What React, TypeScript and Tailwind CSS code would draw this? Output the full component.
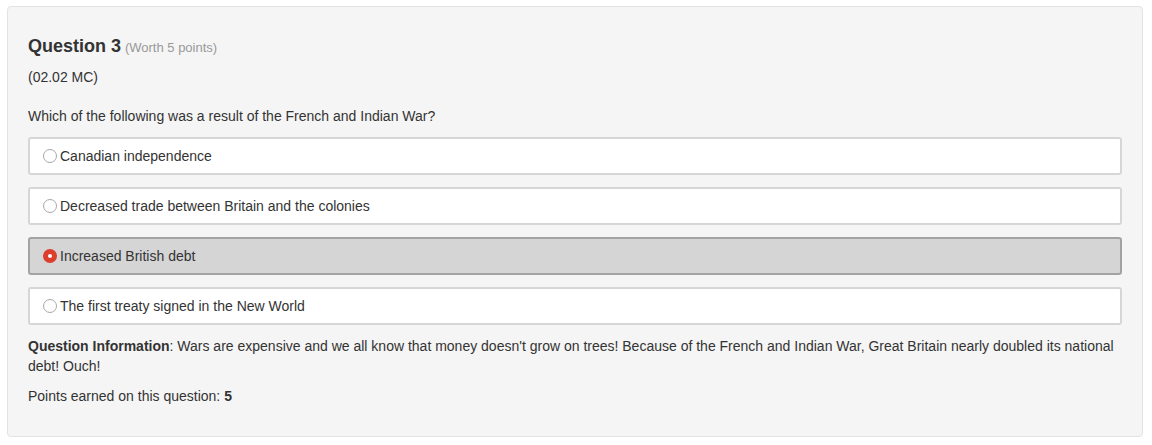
const options = [
  "Canadian independence",
  "Decreased trade between Britain and the colonies",
  "Increased British debt",
  "The first treaty signed in the New World",
];

const selected = 2;

function Radio({ checked }: { checked: boolean }) {
  if (checked) {
    return (
      <span className="flex h-[14px] w-[14px] items-center justify-center rounded-full bg-[#dc3f2c] shrink-0">
        <span className="h-[4px] w-[4px] rounded-full bg-white" />
      </span>
    );
  }
  return <span className="h-[14px] w-[14px] rounded-full border border-[#a8a8a8] bg-white shrink-0" />;
}

export default function App() {
  return (
    <div className="min-h-[445px] bg-white pt-[6px] font-['Liberation_Sans',Arial,sans-serif] text-[14px] text-[#333]">
      <div className="ml-[7px] w-[1136px] rounded-[4px] border border-[#e3e3e3] bg-[#f5f5f5] px-[20px] pt-[29px] pb-[30px]">
        <div className="leading-[20px]">
          <span className="text-[18px] font-bold text-[#333]">Question 3</span>{" "}
          <span className="text-[13px] text-[#999]">(Worth 5 points)</span>
        </div>
        <p className="mt-[9px] leading-[20px]">(02.02 MC)</p>
        <p className="mt-[19px] leading-[20px]">Which of the following was a result of the French and Indian War?</p>
        <div className="mt-[11px] flex flex-col gap-[12px]">
          {options.map((o, i) => (
            <div
              key={o}
              className={`flex h-[38px] items-center gap-[3px] rounded-[3px] border-2 pl-[13px] ${
                i === selected ? "border-[#a3a3a3] bg-[#d5d5d5]" : "border-[#d6d6d6] bg-white"
              }`}
            >
              <Radio checked={i === selected} />
              <span className="leading-[20px]">{o}</span>
            </div>
          ))}
        </div>
        <p className="mt-[11px] leading-[20px]">
          <b>Question Information</b>: Wars are expensive and we all know that money doesn't grow on trees! Because of
          the French and Indian War, Great Britain nearly doubled its national debt! Ouch!
        </p>
        <p className="mt-[10px] leading-[20px]">
          Points earned on this question: <b>5</b>
        </p>
      </div>
    </div>
  );
}
